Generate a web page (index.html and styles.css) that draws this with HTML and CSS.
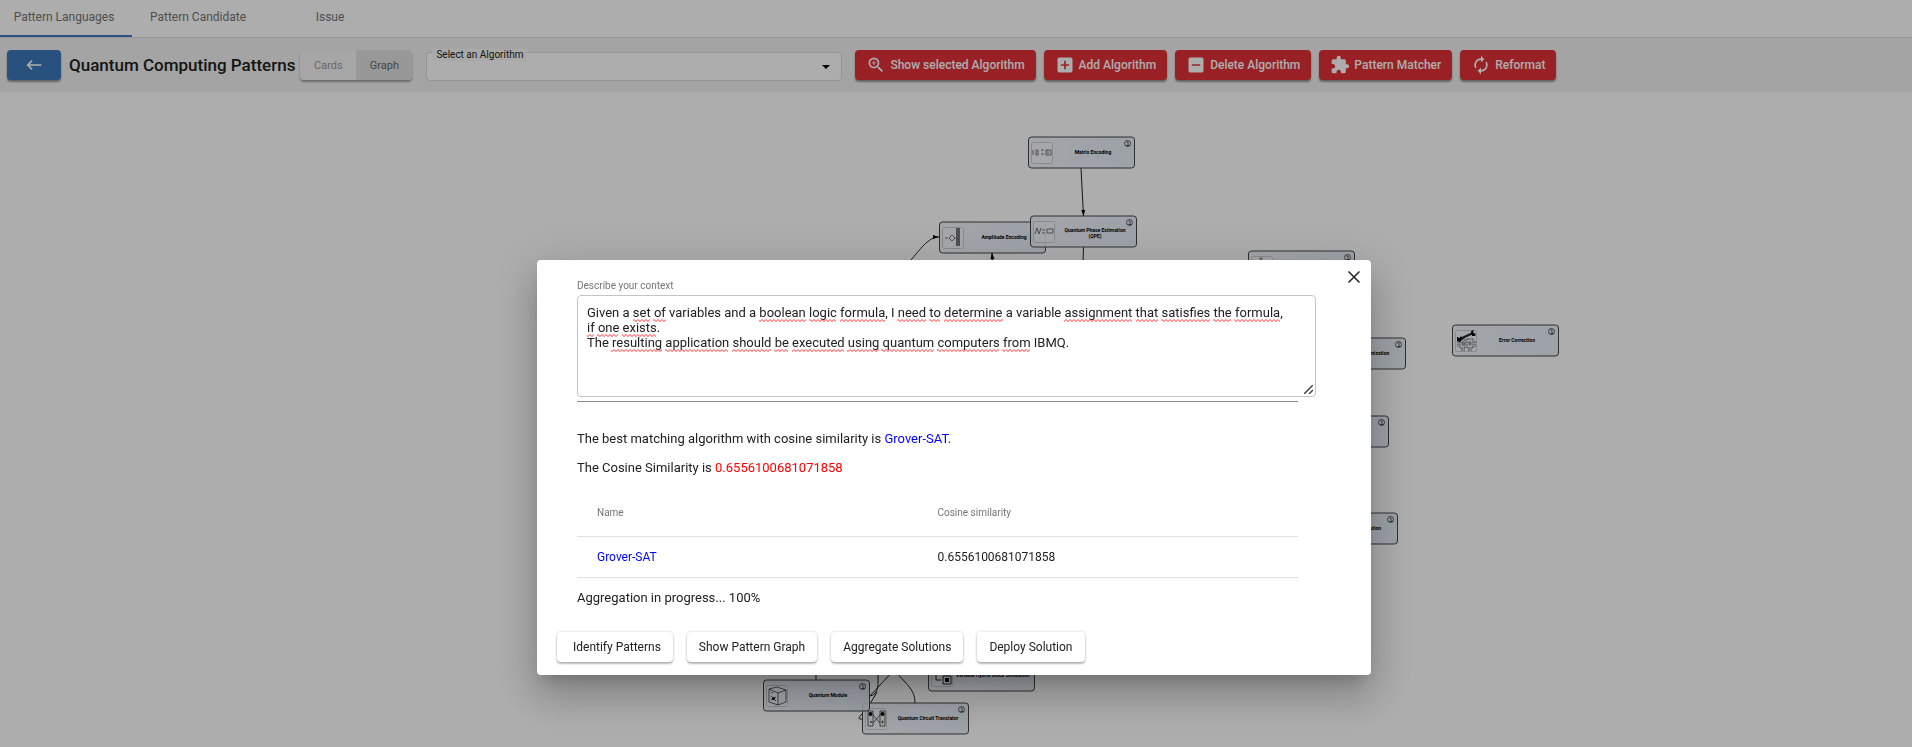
FILE: index.html
```html
<!DOCTYPE html>
<html lang="en">
<head>
<meta charset="utf-8">
<title>Quantum Computing Patterns</title>
<link rel="stylesheet" href="styles.css">
</head>
<body>
<div class="app">
  <nav class="tabs">
    <a class="tab tab-active" href="#languages">Pattern Languages</a>
    <a class="tab" href="#candidate">Pattern Candidate</a>
    <a class="tab" href="#issue">Issue</a>
  </nav>
  <header class="toolbar">
    <button class="back" aria-label="Back"><svg width="20" height="20" viewBox="0 0 24 24"><path fill="currentColor" d="M21 11H6.800l3.600-3.600L9 6l-6 6 6 6 1.400-1.400L6.800 13H21z"/></svg></button>
    <h1 class="title">Quantum Computing Patterns</h1>
    <div class="toggle">
      <button class="toggle-item">Cards</button>
      <button class="toggle-item toggle-on">Graph</button>
    </div>
    <div class="field">
      <label class="field-label" for="algorithm">Select an Algorithm</label>
      <select class="field-select" id="algorithm"><option></option></select>
      <svg class="field-arrow" width="8" height="4" viewBox="0 0 8 4"><path d="M0 0h8L4 4z"/></svg>
    </div>
    <div class="actions">
      <button class="action"><svg width="20" height="20" viewBox="0 0 24 24"><path fill="currentColor" d="M15.500 14h-.79l-.28-.27A6.471 6.471 0 0 0 16 9.500 6.500 6.500 0 1 0 9.500 16c1.610 0 3.090-.59 4.230-1.570l.27.28v.79l5 4.990L20.490 19l-4.990-5zm-6 0C7.010 14 5 11.990 5 9.500S7.010 5 9.500 5 14 7.010 14 9.500 11.990 14 9.500 14zm2.500-4h-2v2H9v-2H7V9h2V7h1v2h2v1z"/></svg>Show selected Algorithm</button>
      <button class="action"><svg width="20" height="20" viewBox="0 0 24 24"><path fill="currentColor" d="M19 3H5a2 2 0 0 0-2 2v14a2 2 0 0 0 2 2h14a2 2 0 0 0 2-2V5a2 2 0 0 0-2-2zm-2 10h-4v4h-2v-4H7v-2h4V7h2v4h4v2z"/></svg>Add Algorithm</button>
      <button class="action"><svg width="20" height="20" viewBox="0 0 24 24"><path fill="currentColor" d="M19 3H5a2 2 0 0 0-2 2v14a2 2 0 0 0 2 2h14a2 2 0 0 0 2-2V5a2 2 0 0 0-2-2zm-2 10H7v-2h10v2z"/></svg>Delete Algorithm</button>
      <button class="action"><svg width="20" height="20" viewBox="0 0 24 24"><path fill="currentColor" d="M20.500 11H19V7a2 2 0 0 0-2-2h-4V3.500a2.500 2.500 0 0 0-5 0V5H4a2 2 0 0 0-2 2v3.800h1.500a2.700 2.700 0 0 1 0 5.400H2V20a2 2 0 0 0 2 2h3.800v-1.500a2.700 2.700 0 0 1 5.400 0V22H17a2 2 0 0 0 2-2v-4h1.500a2.500 2.500 0 0 0 0-5z"/></svg>Pattern Matcher</button>
      <button class="action"><svg width="20" height="20" viewBox="0 0 24 24"><path fill="currentColor" d="M12 6v3l4-4-4-4v3a8 8 0 0 0-6.760 12.260L6.700 14.800A5.870 5.870 0 0 1 6 12a6 6 0 0 1 6-6zm6.760 1.740L17.300 9.200c.44.84.7 1.790.7 2.800a6 6 0 0 1-6 6v-3l-4 4 4 4v-3a8 8 0 0 0 6.760-12.260z"/></svg>Reformat</button>
    </div>
  </header>
  <main class="canvas">
    <svg class="graph" width="1912" height="656" viewBox="0 92 1912 656">
      <defs>
        <linearGradient id="fill" x1="0" x2="1"><stop offset="0" stop-color="#eef3fa"/><stop offset="1" stop-color="#e4edf8"/></linearGradient>
        <marker id="tip" viewBox="0 0 6 6" refX="6" refY="3" markerWidth="6" markerHeight="6" orient="auto"><path d="M0 1l6 2-6 2z"/></marker>
        <g id="node">
          <rect class="box" x=".5" width="106" height="31" rx="3"/>
          <rect class="thumb" x="3.500" y="5.500" width="21" height="21" rx="2"/>
          <circle class="info" cx="99.500" cy="6.500" r="3"/>
          <path d="M98.500 5h1.500v3.500M98.500 8.500h3" class="info-i"/>
        </g>
      </defs>
      <g class="edges">
        <path d="M1081 168L1083.500 216" marker-end="url(#tip)"/>
        <path d="M910 261C920 250 928 237 939 237" marker-end="url(#tip)"/>
        <path d="M992 290V253M995 290L992 253" marker-end="url(#tip)"/>
        <path d="M1083.500 247L1082 290M1162 260.500H1250"/>
        <path d="M816 660V680M878 660V685Q877 696 869 696M892 672L869 697M870 704L877 692M896 672C908 686 915 690 915 703M862 714q-6 6 0 5"/>
      </g>
      <g transform="translate(1028 137)"><use href="#node"/><path class="art" d="M5 13v5M8 13h2v5H8zM13 13h3M13 17h3M18 13h5v5h-5zM20 14v3"/><text x="65" y="17">Matrix Encoding</text></g>
      <g transform="translate(939 222)"><use href="#node"/><path class="art" d="M6 16h3m1 0l3-3 3 3-3 3zM16 16h3"/><path d="M17 6h4v18h-4z" fill="#777"/><text x="65" y="17">Amplitude Encoding</text></g>
      <g transform="translate(1030 216)"><use href="#node"/><path class="art" d="M5 18l2-6 2 6 2-6M12 14h3M12 17h3M17 13h6v4h-6z"/><text x="65" y="16">Quantum Phase Estimation</text><text x="65" y="22">(QPE)</text></g>
      <g transform="translate(1248 251)"><use href="#node"/><path class="art" d="M12 7h2v3h-2z"/></g>
      <g transform="translate(1299 338)"><use href="#node"/><text x="65" y="17">Quantum Optimization</text></g>
      <g transform="translate(1452 325)"><use href="#node"/><path class="ink" d="M8 14L21 8" stroke-width="2"/><path d="M5 12l3 1 1-2 2 3-3 3-3-1zM19 6l3-1-1 2 2 2 1-1-1 3h-3z"/><path class="ink thin" stroke-dasharray="2 .6" d="M8 14h5v9H8zM15 14h6v9h-6zM6 16v6M23 16v6M10 17h2v3h-2zM17 17h2v3h-2zM9 25h4M16 25h4"/><text x="65" y="17">Error Correction</text></g>
      <g transform="translate(1282 416)"><use href="#node"/></g>
      <g transform="translate(1291 513)"><use href="#node"/><text x="58" y="17">Quantum Annealing Solution</text></g>
      <g transform="translate(928 660)"><use href="#node"/><path class="ink" d="M8 14v6h5M15 16h8v8h-8z"/><path d="M17 18h4v4h-4z"/><text x="65" y="17">Variable Hybrid Block Simulation</text></g>
      <g transform="translate(862 703)"><use href="#node"/><path class="ink thin" d="M6 8h5v15H6zM18 8h5v15h-5zM11 12l7 8M11 20l7-8M8 20l1-2 1 2M20 18v2h1v-2z"/><circle cx="8.500" cy="11" r="2"/><circle cx="20.500" cy="11" r="2"/><text x="66" y="17">Quantum Circuit Translator</text></g>
      <g transform="translate(763 680)"><use href="#node"/><path class="ink thin" d="M6 9l8-2 9 3v12l-8 3-9-3zM6 9l9 4 8-3M15 13v12M8 12l2 1M8 16l5 5M8 20l5-3"/><circle cx="10.500" cy="18.500" r="1.500"/><text x="65" y="17">Quantum Module</text></g>
    </svg>
  </main>
</div>
<div class="backdrop">
  <section class="dialog" role="dialog" aria-modal="true" aria-label="Pattern Matcher">
    <button class="close" aria-label="Close"><svg width="12" height="12" viewBox="0 0 12 12"><path d="M.5 .5l11 11M11.500 .5L.5 11.500" stroke="currentColor" stroke-width="1.500"/></svg></button>
    <div class="content">
      <label class="context-label" for="context">Describe your context</label>
      <div class="context-box">
        <textarea class="context" id="context" spellcheck="false">Given a set of variables and a boolean logic formula, I need to determine a variable assignment that satisfies the formula, if one exists.
The resulting application should be executed using quantum computers from IBMQ.</textarea>
        <svg class="squiggles" width="740" height="60" viewBox="577 295 740 60">
          <defs><pattern id="wave" width="4" height="3" y="319" patternUnits="userSpaceOnUse"><path d="M-1 3.500L2 .5l3 3" fill="none" stroke="#f33"/></pattern></defs>
          <path fill="url(#wave)" d="M633 319h17v3h-17zM653 319h13v3h-13zM759 319h47v3h-47zM809 319h27v3h-27zM840 319h45v3h-45zM897 319h29v3h-29zM929 319h11v3h-11zM944 319h59v3h-59zM1064 319h68v3h-68zM1136 319h22v3h-22zM1161 319h49v3h-49zM1213 319h18v3h-18zM1234 319h46v3h-46z"/>
          <path fill="url(#wave)" transform="translate(0 15)" d="M587 319h7v3h-7zM597 319h21v3h-21zM622 319h34v3h-34z"/>
          <path fill="url(#wave)" transform="translate(0 30)" d="M611 319h51v3h-51zM665 319h63v3h-63zM732 319h39v3h-39zM774 319h14v3h-14zM792 319h52v3h-52zM847 319h32v3h-32zM881 319h53v3h-53zM937 319h62v3h-62zM1002 319h28v3h-28z"/>
        </svg>
        <svg class="grip" width="9" height="9" viewBox="0 0 9 9"><path d="M0 9L9 0M5 9l4-4" stroke="#444" stroke-width="1.500"/></svg>
      </div>
      <hr class="rule">
      <p class="line">The best matching algorithm with cosine similarity is <a class="link" href="#grover">Grover-SAT</a>.</p>
      <p class="line">The Cosine Similarity is <span class="score">0.6556100681071858</span></p>
      <table class="results">
        <thead><tr><th>Name</th><th>Cosine similarity</th></tr></thead>
        <tbody><tr><td><a class="link" href="#grover">Grover-SAT</a></td><td>0.6556100681071858</td></tr></tbody>
      </table>
      <p class="line">Aggregation in progress... 100%</p>
    </div>
    <div class="buttons">
      <button class="raised">Identify Patterns</button>
      <button class="raised">Show Pattern Graph</button>
      <button class="raised">Aggregate Solutions</button>
      <button class="raised">Deploy Solution</button>
    </div>
  </section>
</div>
</body>
</html>
```
FILE: styles.css
```css
* { box-sizing: border-box; }
body { margin: 0; font-family: Roboto, "Liberation Sans", sans-serif; font-size: 12px; color: #212121; background: #fff; overflow: hidden; }
button { font: inherit; border: 0; cursor: pointer; }
a { text-decoration: none; }
.app { display: flex; flex-direction: column; height: 100vh; }
.tabs { display: flex; height: 38px; border-bottom: 1px solid #dcdcdc; flex: none; }
.tab { min-width: 132px; display: flex; align-items: center; justify-content: center; padding: 0 12px 2px; color: #757575; border-bottom: 2px solid transparent; }
.tab-active { padding-right: 16px; border-bottom-color: #3f7cc0; }
.toolbar { display: flex; align-items: center; height: 54px; padding: 0 7px; background: #f2f2f2; flex: none; }
.back { display: flex; align-items: center; justify-content: center; width: 54px; height: 30px; border-radius: 4px; color: #fff; background: #3c78b8; box-shadow: 0 2px 2px rgba(0,0,0,.4); }
.title { margin: 0 5px 0 8px; font-size: 17px; font-weight: 500; white-space: nowrap; }
.toggle { display: flex; height: 30px; border-radius: 4px; overflow: hidden; box-shadow: 0 2px 2px rgba(0,0,0,.35); }
.toggle-item { width: 56px; padding: 0; font-size: 11px; color: #9a9a9a; background: #f5f5f5; }
.toggle-on { color: #666; background: #e0e0e0; }
.field { position: relative; width: 416px; height: 29px; margin: 2px 13px 0 14px; }
.field-select { appearance: none; width: 100%; height: 100%; border: 1px solid #dadada; border-radius: 4px; background: #fff; }
.field-label { position: absolute; left: 6px; top: -3px; padding: 0 4px; font-size: 10px; line-height: 12px; background: #fafafa; }
.field-arrow { position: absolute; right: 12px; top: 13px; }
.actions { display: flex; gap: 8px; }
.action { display: flex; align-items: center; gap: 4px; height: 30px; padding: 0 11px; border-radius: 4px; font-weight: 500; color: #fff; background: #e23037; box-shadow: 0 2px 2px rgba(0,0,0,.4); white-space: nowrap; }
.canvas { flex: 1; min-height: 0; overflow: hidden; }
.graph { display: block; font-size: 5px; font-weight: 700; text-anchor: middle; }
.box { fill: url(#fill); fill-opacity: .9; stroke: #444; stroke-width: 1; }
.thumb { fill: #fff; fill-opacity: .3; stroke: #ccc; }
.info, .info-i { fill: none; stroke: #222; stroke-width: .7; }
.art { fill: none; stroke: #777; }
.ink { fill: none; stroke: #222; }
.thin { stroke-width: .7; }
.edges { fill: none; stroke: #222; stroke-width: 1; }
.backdrop { position: fixed; inset: 0; display: flex; align-items: flex-start; justify-content: center; padding: 260px 4px 0 0; background: rgba(0,0,0,.32); }
.dialog { position: relative; display: flex; flex-direction: column; width: 834px; padding: 20px 20px 13px; border-radius: 4px; background: #fff; box-shadow: 0 11px 15px -7px rgba(0,0,0,.2), 0 24px 38px 3px rgba(0,0,0,.14), 0 9px 46px 8px rgba(0,0,0,.12); }
.close { position: absolute; right: 11px; top: 11px; display: flex; padding: 0; background: none; color: #212121; }
.content { padding: 0 53px 0 20px; font-size: 13px; }
.context-label { display: block; font-size: 10px; line-height: 12px; color: #757575; }
.context-box { position: relative; width: 739px; height: 102px; margin-top: 3px; }
.context { display: block; width: 100%; height: 100%; padding: 9px 24px 9px 9px; border: 1px solid #c4c4c4; border-radius: 4px; font: 13px/15px Roboto, "Liberation Sans", sans-serif; color: #212121; background: transparent; resize: none; outline: 0; overflow: hidden; }
.squiggles { position: absolute; left: 0; top: 0; pointer-events: none; }
.grip { position: absolute; right: 3px; bottom: 3px; }
.rule { height: 1px; margin: 4px 0 29px; border: 0; background: #8a8a8a; }
.line { margin: 0 0 13px; line-height: 16px; }
.link { color: #00f; }
.score { color: #f00; }
.results { width: 100%; margin-bottom: 12px; border-collapse: collapse; table-layout: fixed; font-size: 12px; text-align: left; }
.results th { height: 47px; padding: 0 20px; font-size: 10px; font-weight: 400; color: #757575; border-bottom: 1px solid #e0e0e0; }
.results td { height: 41px; padding: 0 20px; border-bottom: 1px solid #e0e0e0; }
.results th + th, .results td + td { padding-left: 0; }
.buttons { display: flex; gap: 14px; margin-top: 13px; }
.raised { height: 30px; padding: 0 12px; border-radius: 4px; color: #212121; background: #fff; box-shadow: 0 2px 2px rgba(0,0,0,.25), 0 0 3px rgba(0,0,0,.18); white-space: nowrap; }
.raised:first-child { padding: 0 12px 0 16px; }
```
